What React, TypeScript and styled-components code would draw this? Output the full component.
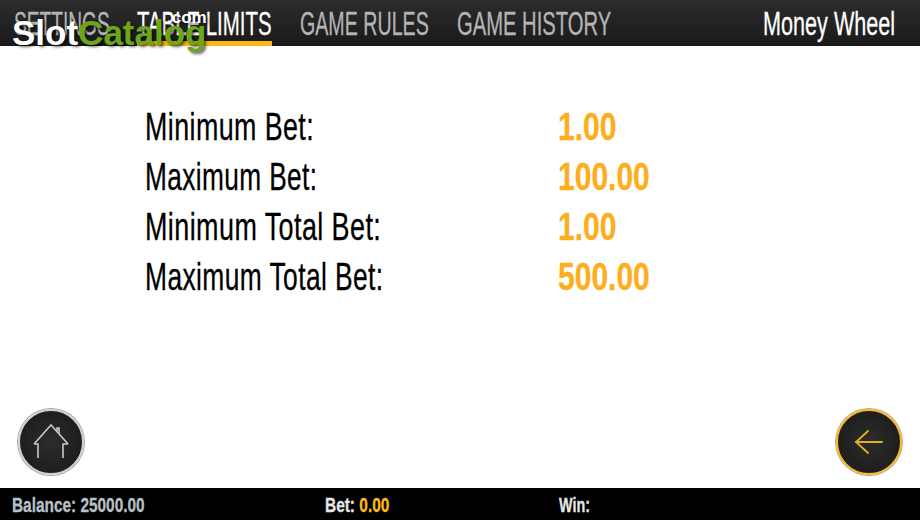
import React from 'react';
import styled, {createGlobalStyle} from 'styled-components';

const Global = createGlobalStyle`
	html, body { margin: 0; padding: 0; background: #fff; }
	body { font-family: "Liberation Sans", sans-serif; }
`;

const Page = styled.div`
	position: relative;
	width: 920px;
	height: 520px;
	overflow: hidden;
	display: flex;
	flex-direction: column;
	background: #fff;
`;

// no Oswald here, so a wide font gets squeezed to the same text widths
const Condensed = styled.span<{$scale: number}>`
	display: inline-block;
	white-space: nowrap;
	transform-origin: left center;
	transform: scaleX(${p => p.$scale});
	-webkit-text-stroke: 0.3px currentColor;
`;

const Header = styled.header`
	height: 46px;
	flex: none;
	display: flex;
	justify-content: space-between;
	padding-left: 14px;
	background: linear-gradient(#2c2c2c, #1a1a1a);
`;

const Tabs = styled.nav`
	display: flex;
	gap: 28px;
`;

const Tab = styled.div<{$active?: boolean; $width: number}>`
	width: ${p => p.$width}px;
	height: 46px;
	box-sizing: border-box;
	line-height: 47px;
	font-size: 33px;
	color: ${p => p.$active ? '#fff' : '#b4b4b4'};
	border-bottom: 5px solid ${p => p.$active ? '#fdb913' : 'transparent'};
`;

const GameName = styled.div`
	width: 157px;
	line-height: 47px;
	font-size: 33px;
	color: #fff;
`;

const Content = styled.main`
	flex: 1;
	padding: 56px 0 0 145px;
	display: grid;
	grid-template-columns: 413px 1fr;
	grid-auto-rows: 50px;
	align-content: start;
	font-size: 38px;
	line-height: 50px;
`;

const Label = styled.div`
	color: #000;
	letter-spacing: 0.6px;
`;

const Value = styled.div`
	color: #fdae1c;
	font-weight: 700;
`;

const Actions = styled.div`
	display: flex;
	justify-content: space-between;
	padding: 0 18px 13px 18px;
`;

const RoundButton = styled.button<{$accent?: boolean}>`
	width: 66px;
	height: 66px;
	padding: 0;
	border-radius: 50%;
	display: flex;
	align-items: center;
	justify-content: center;
	box-sizing: border-box;
	background: radial-gradient(circle, #2c2c2c, #191919);
	border: 2px solid ${p => p.$accent ? '#fdb913' : '#cfcfcf'};
	box-shadow: 0 0 0 1px #a8a8a8;
`;

const Footer = styled.footer`
	height: 32px;
	flex: none;
	box-sizing: border-box;
	background: #000;
	display: flex;
	align-items: center;
	padding: 2px 0 0 12px;
	font-size: 21px;
	font-weight: 700;
`;

const Stat = styled.div<{$width: number; $muted?: boolean}>`
	width: ${p => p.$width}px;
	color: ${p => p.$muted ? '#b8c0c8' : '#e6e6e6'};
`;

const Amount = styled.span`
	color: #fdb913;
`;

const Logo = styled.div`
	position: absolute;
	left: 12px;
	top: 9px;
	font-weight: 700;
	font-size: 35px;
	line-height: 48px;
	color: #fff;
	text-shadow: 2px 2px 3px rgba(0, 0, 0, .6);
`;

const LogoGreen = styled.span`
	color: #6da51c;
`;

const LogoCom = styled.span`
	position: absolute;
	left: 155px;
	top: -3px;
	font-size: 17px;
	line-height: 24px;
`;

const tabs = [
	{label: 'SETTINGS', width: 95, scale: 0.58},
	{label: 'TABLE LIMITS', width: 135, scale: 0.618, active: true},
	{label: 'GAME RULES', width: 129, scale: 0.595},
	{label: 'GAME HISTORY', width: 154, scale: 0.612},
];

const limits = [
	{label: 'Minimum Bet:', value: '1.00', scale: 0.706},
	{label: 'Maximum Bet:', value: '100.00', scale: 0.69},
	{label: 'Minimum Total Bet:', value: '1.00', scale: 0.709},
	{label: 'Maximum Total Bet:', value: '500.00', scale: 0.694},
];

export default function App() {
	return <Page>
		<Global/>
		<Header>
			<Tabs>
				{tabs.map(t => <Tab key={t.label} $width={t.width} $active={t.active}>
					<Condensed $scale={t.scale}>{t.label}</Condensed>
				</Tab>)}
			</Tabs>
			<GameName><Condensed $scale={0.655}>Money Wheel</Condensed></GameName>
		</Header>
		<Content>
			{limits.map(l => <React.Fragment key={l.label}>
				<Label><Condensed $scale={l.scale}>{l.label}</Condensed></Label>
				<Value><Condensed $scale={0.79}>{l.value}</Condensed></Value>
			</React.Fragment>)}
		</Content>
		<Actions>
			<RoundButton>
				<svg width="36" height="36" viewBox="0 0 36 36" fill="none" stroke="#c8c8c8" strokeWidth="1.6">
					<path d="M1 20 L18 1 L35 20"/>
					<path d="M24 7 V4 H26 V10"/>
					<path d="M1 20 H5 V34"/>
					<path d="M35 20 H30 V34"/>
				</svg>
			</RoundButton>
			<RoundButton $accent>
				<svg width="28" height="24" viewBox="0 0 28 24" fill="none" stroke="#e6b021" strokeWidth="1.8" strokeLinecap="round">
					<path d="M13 1 L1 12 L13 23"/>
					<path d="M1 12 H27"/>
				</svg>
			</RoundButton>
		</Actions>
		<Footer>
			<Stat $width={313} $muted><Condensed $scale={0.733}>Balance: 25000.00</Condensed></Stat>
			<Stat $width={234}><Condensed $scale={0.735}>Bet: <Amount>0.00</Amount></Condensed></Stat>
			<Stat $width={100}><Condensed $scale={0.685}>Win:</Condensed></Stat>
		</Footer>
		<Logo>Slot<LogoGreen>Catalog</LogoGreen><LogoCom>.com</LogoCom></Logo>
	</Page>;
}
